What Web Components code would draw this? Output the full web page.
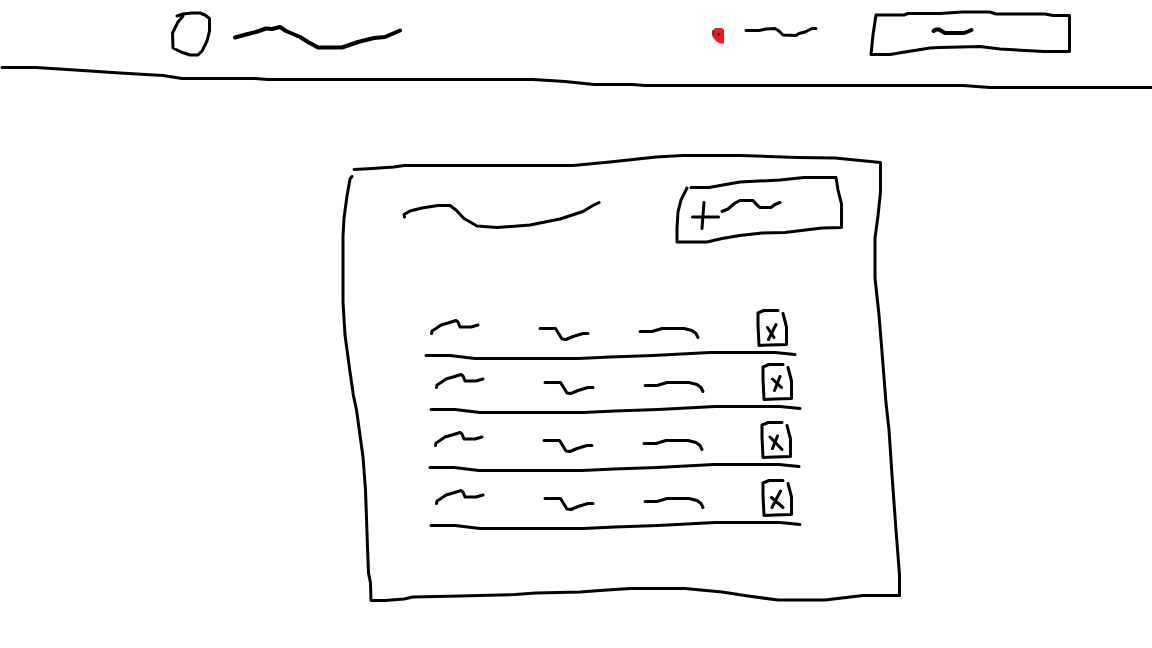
<!DOCTYPE html>
<html lang="en">
<head>
<meta charset="utf-8">
<meta name="viewport" content="width=device-width, initial-scale=1">
<title>Wireframe</title>
<style>
  body { margin: 0; background: #fff; color: #000; font-family: "Liberation Sans", sans-serif; }
</style>
</head>
<body>
<wire-page>
  <wire-header slot="header"></wire-header>
  <wire-card>
    <wire-table></wire-table>
  </wire-card>
</wire-page>

<script>
// Strokes shared by every component: round pen, black ink.
const INK = `
  svg { display: block; flex: none; overflow: visible; fill: none; stroke: currentColor;
        stroke-width: 3px; stroke-linecap: round; stroke-linejoin: round; }
  .bold { stroke-width: 4px; }
  .frame { position: absolute; inset: 0; width: 100%; height: 100%; }
  button { position: relative; display: flex; margin: 0; padding: 0; border: 0;
           background: none; color: inherit; font: inherit; cursor: pointer; }
  a { color: inherit; }
`;

const define = (name, html) => customElements.define(name, class extends HTMLElement {
  constructor() {
    super();
    this.attachShadow({ mode: "open" }).innerHTML = html;
  }
});

define("wire-page", `
  <style>
    :host { display: block; min-height: 100vh; }
    main { display: flex; justify-content: center; padding: 60px 0 44px 92px; }
  </style>
  <slot name="header"></slot>
  <main><slot></slot></main>
`);

define("wire-header", `
  <style>${INK}
    :host { display: block; }
    nav { display: flex; gap: 16px; padding: 8px 80px 0 168px; }
    .brand { display: flex; gap: 16px; }
    .status { display: flex; gap: 12px; margin-left: auto; margin-right: 32px; }
    button { padding-left: 60px; width: 204px; }
    .rule { width: 100%; height: 32px; }
  </style>
  <header>
    <nav aria-label="Main">
      <a class="brand" href="#" aria-label="Home">
        <svg width="48" height="52" viewBox="168 8 48 52"><path d="M177 16L183 14L192 13H200L205 15L209.5 18.500V31L207 41L202 51L198 55H190L181 52L173 48L172.500 33L178 22L183 16"/></svg>
        <svg class="bold" width="172" height="52" viewBox="232 8 172 52"><path d="M235 37.500L246 34.500L256 32L266 28.500L272 29L280 27L286 31L300 37L308 42L318 47.500H342L358 42L374 38L385 37L400 30.500"/></svg>
      </a>
      <a class="status" href="#" aria-label="Status">
        <svg width="20" height="52" viewBox="708 8 20 52">
          <path fill="#ed1c24" stroke="none" d="M712.500 31L715 28H722L724 30V43.500H720L716 41L712.500 37Z"/>
          <path style="stroke-width:1px" d="M713 30.500V35"/>
          <circle cx="718.500" cy="34.500" r="1.300" fill="currentColor" stroke="none"/>
        </svg>
        <svg width="80" height="52" viewBox="740 8 80 52"><path d="M746 30.500H759L766 29L775 28.500L779 31L783 35L796 35.500L799 33.500L805 32L812 28.500H816"/></svg>
      </a>
      <button type="button" aria-label="Account">
        <svg class="frame" viewBox="868 8 204 52" preserveAspectRatio="none"><path vector-effect="non-scaling-stroke" d="M876 15H904L908 13.500H940L962 12H990L996 14H1045L1053 15.500H1069.500V51.500H1044L1000 49L980 46.500L940 47.500L930 48L905 52L890 54.500H871L873 35L876 15"/></svg>
        <svg class="bold" width="48" height="52" viewBox="928 8 48 52"><path d="M933.500 31L936 29.500H939L945 33H964L968 31.500L971.500 30"/></svg>
      </button>
    </nav>
    <svg class="rule" viewBox="0 60 1152 32" preserveAspectRatio="none"><path vector-effect="non-scaling-stroke" d="M2 67.500H36L75 70L120 73L163 75.500L182 78.500H255L268 79.500H533L565 81.500L594 84.500H632L645 85.500H963L990 87.500H1152"/></svg>
  </header>
`);

define("wire-card", `
  <style>${INK}
    :host { display: block; width: 564px; }
    section { position: relative; padding: 24px 0 72px; }
    .top { display: flex; justify-content: space-between; padding: 0 58px 0 60px; }
    h1 { margin: 0; }
    button { gap: 4px; width: 172px; padding-left: 14px; }
    .body { padding: 64px 96px 0 82px; }
  </style>
  <section>
    <svg class="frame" viewBox="340 152 564 452" preserveAspectRatio="none"><path vector-effect="non-scaling-stroke" d="M354 169.500L372 168.500L394 167L404 165.500H573L610 162L656 157L683 155.500H740L797 157.500L835 158L880.500 162.500V192L878 216L875 238V278L879 315L882 352L886 403L889 430L892 475L896 530L899.500 575V595.500H863L825 600H778L748 596L722 592L685 588.500H630L600 590.500L580 592L536 593L515 594.500L460 596L413 597L404 599L385 600.500H371L370.500 583L368.500 573L367.500 547L365.500 490L363 457L356.500 410L353.500 396L350 372L345 335L343 302V236L344 218L347 196L350 179L352 176.500"/></svg>
    <div class="top">
      <h1 aria-label="Title"><svg width="202" height="68" viewBox="400 176 202 68"><path d="M404.500 217L404 214.500L410 211L422 208L438 205.500H450L456 210L464 218.500L477 226L497 227.500L530 225L560 219L583 211.500L592 206L599 202.500"/></svg></h1>
      <button type="button" aria-label="Add">
        <svg class="frame" viewBox="674 176 172 68" preserveAspectRatio="none"><path vector-effect="non-scaling-stroke" d="M691 187.500H709L723 185L740 182L780 180L804 177.500H836L838 190L841.500 204V227.500L822 228L785 232.500L762 233L740 235.500L722 238.500L707 242H677V228L678 212L681 200L687 188"/></svg>
        <svg width="32" height="68" viewBox="688 176 32 68"><path d="M692.500 217H718.500M704 202.500L703 215L702 228.500"/></svg>
        <svg width="60" height="68" viewBox="724 176 60 68"><path d="M722 211.500L728 209L735 203L740 200.500H753L757 205L760 207.500H771L775 204.500L780 202.500"/></svg>
      </button>
    </div>
    <div class="body"><slot></slot></div>
  </section>
`);

// One record per row: pen start, row height and the cross of its remove button.
const rows = [
  { x: 422, cls: "",     cross: "M767.500 327.500L774 337.500M776 324.500L768.500 339.500" },
  { x: 417, cls: "",     cross: "M767.500 325L776.500 333.500M775 322.500L769.500 336.500" },
  { x: 418, cls: "tall", cross: "M766 325L778 337.500M773.500 324L768.500 336.500" },
  { x: 417, cls: "tall", cross: "M766.500 327.500L778 337.500M775.500 321L767 337.500" },
];

const row = ({ x, cls, cross }) => `
  <tr class="${cls}">
    <td>
      <svg width="100" height="54" viewBox="${x} 308 100 54"><path d="M431.500 333.500L432 331L436 328.500L441 325L448 323L456 320.500L458 322L460 327H471L478 325"/></svg>
      <svg class="rule" viewBox="${x} 346 386 16" preserveAspectRatio="none"><path vector-effect="non-scaling-stroke" d="M426 355.500H450L475 358.500H578L610 357L653 355.500L710 352.500H775L795 354.500"/></svg>
    </td>
    <td><svg width="100" height="54" viewBox="${x + 100} 308 100 54"><path d="M540 328.500H555.500L562 339L566 339.500L573 336.500L583 333.500H588"/></svg></td>
    <td><svg width="120" height="54" viewBox="${x + 200} 308 120 54"><path d="M640 331.500H652L662 328.500H684L692 330.500L696 333.500L698 337.500"/></svg></td>
    <td class="action"><button type="button" aria-label="Remove"><svg width="44" height="40" viewBox="${x + 328} 308 44 40"><path d="M778 310.500H764L758 313V325L759 345.500L770 345L786.500 344.500V327L783 313.500${cross}"/></svg></button></td>
  </tr>`;

define("wire-table", `
  <style>${INK}
    :host { display: block; }
    table { width: 100%; border-collapse: collapse; table-layout: fixed; }
    tr { position: relative; height: 54px; }
    tr.tall { height: 58px; }
    td { padding: 0; vertical-align: bottom; }
    td.action { padding: 0 0 14px 8px; }
    .rule { position: absolute; left: 0; bottom: 0; width: 100%; height: 16px; }
  </style>
  <table aria-label="Records">
    <colgroup><col style="width:100px"><col style="width:100px"><col style="width:120px"><col></colgroup>
    <tbody>${rows.map(row).join("")}</tbody>
  </table>
`);
</script>
</body>
</html>
